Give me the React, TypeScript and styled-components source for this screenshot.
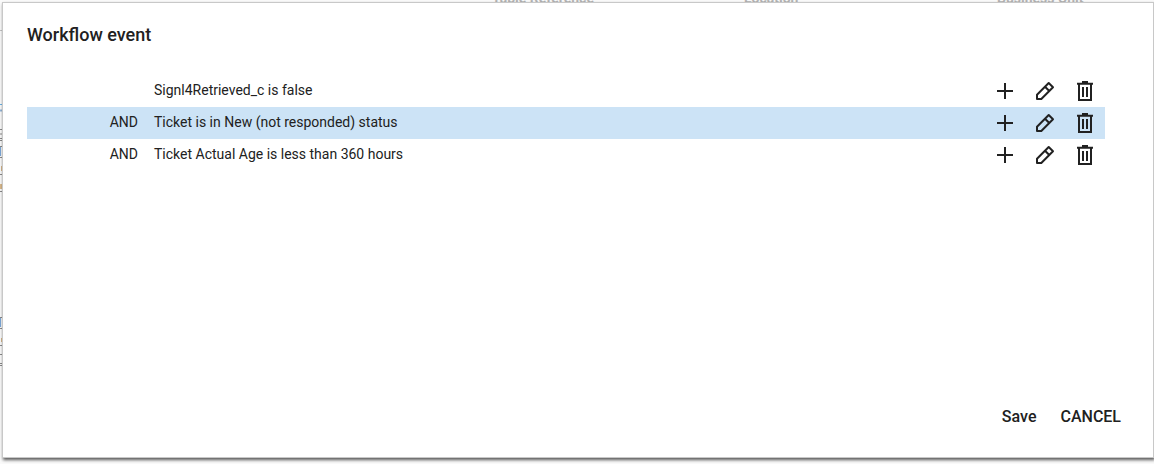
import React from "react";
import styled, { createGlobalStyle } from "styled-components";

const GlobalStyle = createGlobalStyle`
  * { box-sizing: border-box; }
  body {
    margin: 0;
    background: #fafafa;
    color: #212121;
    font-family: Roboto, "Liberation Sans", sans-serif;
  }
`;

const Page = styled.div`
  position: relative;
  min-height: 100vh;
  padding: 2px 0 6px 2px;
  overflow: hidden;
  display: flex;
`;

const Underlay = styled.div`
  position: absolute;
  inset: 0;
  overflow: hidden;
`;

const ColumnHeads = styled.div`
  display: grid;
  grid-template-columns: 492fr 252fr 253fr 157fr;
  margin-top: -12px;
  font: bold 14px/20px Roboto, "Liberation Sans", sans-serif;
  color: #b4b4b4;
`;

const EdgeMarks = styled.svg`
  position: absolute;
  left: 0;
  top: 0;
`;

const Dialog = styled.section`
  position: relative;
  flex: 1;
  display: flex;
  flex-direction: column;
  padding: 20px 24px 24px;
  background: #fff;
  border: 1px solid #c8c8c8;
  box-shadow: 1px 2px 3px rgba(0, 0, 0, 0.65);
`;

const Title = styled.h1`
  margin: 0;
  font-size: 18px;
  font-weight: 500;
  line-height: 24px;
`;

const Conditions = styled.ul`
  flex: 1;
  margin: 28px 24px 0 0;
  padding: 0;
  list-style: none;
`;

const Condition = styled.li<{ $selected?: boolean }>`
  display: flex;
  align-items: flex-start;
  height: 32px;
  padding: 4px 8px 4px 0;
  font-size: 14px;
  line-height: 22px;
  background: ${(p) => (p.$selected ? "#cce3f6" : "transparent")};
`;

const Operator = styled.span`
  width: 111px;
  margin-right: 16px;
  text-align: right;
`;

const Description = styled.span`
  flex: 1;
`;

const Actions = styled.div`
  display: flex;
  gap: 16px;
`;

const IconButton = styled.button`
  display: flex;
  padding: 0;
  border: 0;
  background: none;
  color: #212121;
  cursor: pointer;
`;

const Footer = styled.footer`
  display: flex;
  justify-content: flex-end;
  padding-right: 8px;
  gap: 24px;
`;

const TextButton = styled.button`
  padding: 0;
  border: 0;
  background: none;
  color: #212121;
  font: 500 16px/32px Roboto, "Liberation Sans", sans-serif;
  cursor: pointer;
`;

const iconProps = {
  width: 24,
  height: 24,
  viewBox: "0 0 24 24",
  fill: "none",
  stroke: "currentColor",
  strokeWidth: 2,
  "aria-hidden": true,
};

const PlusIcon = () => (
  <svg {...iconProps}>
    <path d="M12 4v16M4 12h16" />
  </svg>
);

const PencilIcon = () => (
  <svg {...iconProps}>
    <path d="M4 15.7 15.7 4 20 8.3 8.3 20H4zM12 7.7l4.3 4.3" strokeLinejoin="round" />
  </svg>
);

const TrashIcon = () => (
  <svg {...iconProps}>
    <path d="M9 3h6M4 4.8h16M6 5v16h12V5M10 8v10M14 8v10" />
  </svg>
);

const conditions = [
  { operator: "", text: "Signl4Retrieved_c is false" },
  { operator: "AND", text: "Ticket is in New (not responded) status", selected: true },
  { operator: "AND", text: "Ticket Actual Age is less than 360 hours" },
];

export default function App() {
  return (
    <Page>
      <GlobalStyle />
      <Underlay aria-hidden="true">
        <ColumnHeads>
          <span />
          <span>Table Reference</span>
          <span>Location</span>
          <span>Business Unit</span>
        </ColumnHeads>
        <EdgeMarks width="2" height="464">
          <path d="M0 30.5h2" stroke="#c4c4c4" />
          <path d="M0 104.5h2" stroke="#6bb3e6" />
          <path d="M0 110.5h2" stroke="#93b4d6" strokeWidth="2" />
          <path d="M0 129.5h2M0 134h2M0 138.5h2M0 140.5h2M0 146.5h2M0 157.5h2M0 174.5h2M0 191.5h2M0 317.5h2M0 328.5h2M0 345.5h2M0 354.5h2M0 363.5h2M0 365.5h2" stroke="#8a8a8a" />
          <path d="M0 147h1v9H0zM0 318h1v9H0z" fill="#7ba6d6" />
          <path d="M1 166h1v5H1zM0 184h2v5H0zM1 338h1v4H1z" fill="#d9b98c" />
        </EdgeMarks>
      </Underlay>
      <Dialog role="dialog" aria-labelledby="dialog-title">
        <Title id="dialog-title">Workflow event</Title>
        <Conditions>
          {conditions.map((c) => (
            <Condition key={c.text} $selected={c.selected}>
              <Operator>{c.operator}</Operator>
              <Description>{c.text}</Description>
              <Actions>
                <IconButton type="button" aria-label="Add condition"><PlusIcon /></IconButton>
                <IconButton type="button" aria-label="Edit condition"><PencilIcon /></IconButton>
                <IconButton type="button" aria-label="Delete condition"><TrashIcon /></IconButton>
              </Actions>
            </Condition>
          ))}
        </Conditions>
        <Footer>
          <TextButton type="button">Save</TextButton>
          <TextButton type="button">CANCEL</TextButton>
        </Footer>
      </Dialog>
    </Page>
  );
}
